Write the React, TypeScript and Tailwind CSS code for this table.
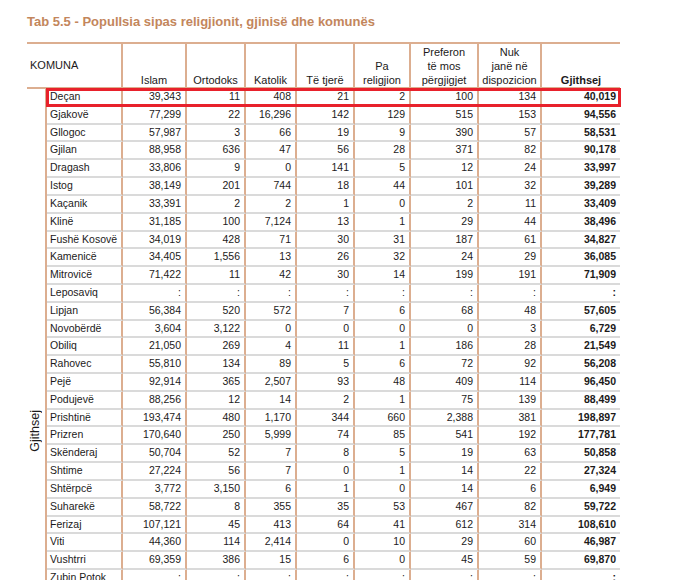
const rows: string[][] = [
  ["Deçan", "39,343", "11", "408", "21", "2", "100", "134", "40,019"],
  ["Gjakovë", "77,299", "22", "16,296", "142", "129", "515", "153", "94,556"],
  ["Gllogoc", "57,987", "3", "66", "19", "9", "390", "57", "58,531"],
  ["Gjilan", "88,958", "636", "47", "56", "28", "371", "82", "90,178"],
  ["Dragash", "33,806", "9", "0", "141", "5", "12", "24", "33,997"],
  ["Istog", "38,149", "201", "744", "18", "44", "101", "32", "39,289"],
  ["Kaçanik", "33,391", "2", "2", "1", "0", "2", "11", "33,409"],
  ["Klinë", "31,185", "100", "7,124", "13", "1", "29", "44", "38,496"],
  ["Fushë Kosovë", "34,019", "428", "71", "30", "31", "187", "61", "34,827"],
  ["Kamenicë", "34,405", "1,556", "13", "26", "32", "24", "29", "36,085"],
  ["Mitrovicë", "71,422", "11", "42", "30", "14", "199", "191", "71,909"],
  ["Leposaviq", ":", ":", ":", ":", ":", ":", ":", ":"],
  ["Lipjan", "56,384", "520", "572", "7", "6", "68", "48", "57,605"],
  ["Novobërdë", "3,604", "3,122", "0", "0", "0", "0", "3", "6,729"],
  ["Obiliq", "21,050", "269", "4", "11", "1", "186", "28", "21,549"],
  ["Rahovec", "55,810", "134", "89", "5", "6", "72", "92", "56,208"],
  ["Pejë", "92,914", "365", "2,507", "93", "48", "409", "114", "96,450"],
  ["Podujevë", "88,256", "12", "14", "2", "1", "75", "139", "88,499"],
  ["Prishtinë", "193,474", "480", "1,170", "344", "660", "2,388", "381", "198,897"],
  ["Prizren", "170,640", "250", "5,999", "74", "85", "541", "192", "177,781"],
  ["Skënderaj", "50,704", "52", "7", "8", "5", "19", "63", "50,858"],
  ["Shtime", "27,224", "56", "7", "0", "1", "14", "22", "27,324"],
  ["Shtërpcë", "3,772", "3,150", "6", "1", "0", "14", "6", "6,949"],
  ["Suharekë", "58,722", "8", "355", "35", "53", "467", "82", "59,722"],
  ["Ferizaj", "107,121", "45", "413", "64", "41", "612", "314", "108,610"],
  ["Viti", "44,360", "114", "2,414", "0", "10", "29", "60", "46,987"],
  ["Vushtrri", "69,359", "386", "15", "6", "0", "45", "59", "69,870"],
  ["Zubin Potok", ":", ":", ":", ":", ":", ":", ":", ":"],
];

const headers: string[][] = [
  ["Islam"],
  ["Ortodoks"],
  ["Katolik"],
  ["Të tjerë"],
  ["Pa", "religjion"],
  ["Preferon", "të mos", "përgjigjet"],
  ["Nuk", "janë në", "dispozicion"],
];

export default function App() {
  return (
    <div className="min-h-screen bg-white pl-[27px] pt-[14px] text-[#1c1a1a] [font-family:'Liberation_Sans',Arial,sans-serif]">
      <h1 className="h-[16px] text-[13px] font-bold leading-[16px] text-[#c3865c]">
        Tab 5.5 - Popullsia sipas religjionit, gjinisë dhe komunës
      </h1>

      <div className="relative mt-[12px] w-[593px]">
        <table className="w-[593px] table-fixed border-separate border-spacing-0">
          <colgroup>
            <col className="w-[20px]" />
            <col className="w-[76px]" />
            <col className="w-[64px]" />
            <col className="w-[59px]" />
            <col className="w-[51px]" />
            <col className="w-[58px]" />
            <col className="w-[56px]" />
            <col className="w-[68px]" />
            <col className="w-[63px]" />
            <col className="w-[78px]" />
          </colgroup>
          <thead>
            <tr>
              <th
                colSpan={2}
                className="border-y-2 border-r-2 border-[#dcae90] p-0 text-left align-middle text-[11px] font-normal"
              >
                <div className="flex h-[43px] items-center pl-[3px] pb-[1px]">KOMUNA</div>
              </th>
              {headers.map((h) => (
                <th
                  key={h.join(" ")}
                  className="border-y-2 border-r-2 border-[#dcae90] p-0 text-[11px] font-normal"
                >
                  <div className="flex h-[43px] flex-col items-center justify-end leading-[14px]">
                    {h.map((line) => (
                      <span key={line}>{line}</span>
                    ))}
                  </div>
                </th>
              ))}
              <th className="border-y-2 border-[#dcae90] p-0 text-[11px] font-bold">
                <div className="flex h-[43px] flex-col items-center justify-end leading-[14px]">
                  <span>Gjithsej</span>
                </div>
              </th>
            </tr>
          </thead>
          <tbody>
            {rows.map((r, i) => (
              <tr key={r[0]}>
                {i === 0 && (
                  <td
                    rowSpan={rows.length}
                    className="border-r-2 border-r-[#dcae90] p-0 align-top"
                  >
                    <div className="flex justify-center pt-[321px] pr-[3px]">
                      <span className="rotate-180 text-[12.5px] leading-[14px] [writing-mode:vertical-rl]">
                        Gjithsej
                      </span>
                    </div>
                  </td>
                )}
                <td className="border-r-2 border-b-2 border-r-[#dcae90] border-b-[#dadada] p-0 text-[10.5px]">
                  <div className="h-[15.82px] overflow-hidden whitespace-nowrap pl-[3px] leading-[15.82px]">
                    {r[0]}
                  </div>
                </td>
                {r.slice(1, 8).map((v, j) => (
                  <td
                    key={j}
                    className="border-r-2 border-b-2 border-r-[#dcae90] border-b-[#dadada] p-0 text-right text-[10.5px]"
                  >
                    <div className="h-[15.82px] pr-[4px] leading-[15.82px]">{v}</div>
                  </td>
                ))}
                <td className="border-b-2 border-b-[#dadada] p-0 text-right text-[10.5px] font-bold">
                  <div className="h-[15.82px] pr-[4px] leading-[15.82px]">{r[8]}</div>
                </td>
              </tr>
            ))}
          </tbody>
        </table>

        <div className="pointer-events-none absolute left-[19px] top-[46px] h-[19px] w-[575px] border-[3px] border-[#e8212b]" />
      </div>
    </div>
  );
}
